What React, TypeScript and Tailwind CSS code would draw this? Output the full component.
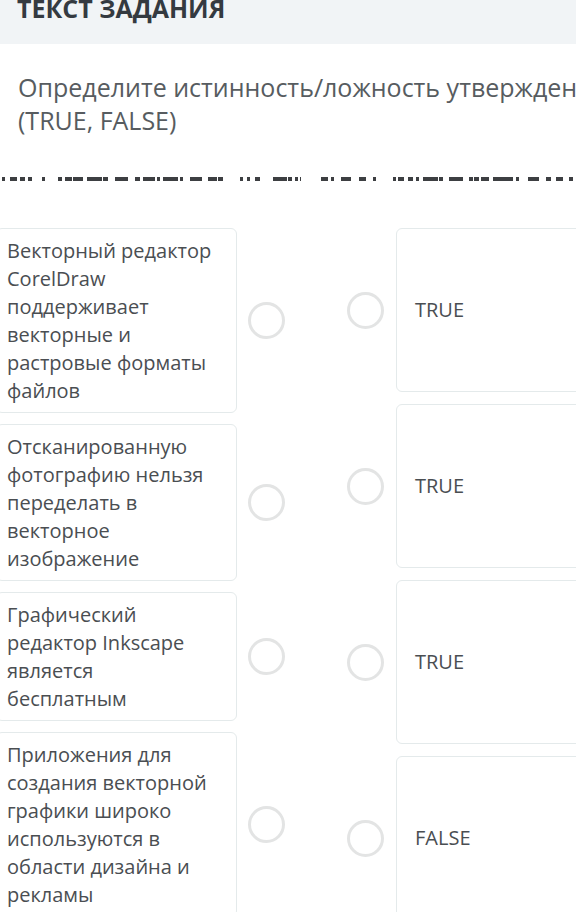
const font = { fontFamily: '"Open Sans", "Noto Sans", sans-serif' };

const statements = [
  ['Векторный редактор', 'CorelDraw', 'поддерживает', 'векторные и', 'растровые форматы', 'файлов'],
  ['Отсканированную', 'фотографию нельзя', 'переделать в', 'векторное', 'изображение'],
  ['Графический', 'редактор Inkscape', 'является', 'бесплатным'],
  ['Приложения для', 'создания векторной', 'графики широко', 'используются в', 'области дизайна и', 'рекламы'],
];

const answers = ['TRUE', 'TRUE', 'TRUE', 'FALSE'];

// dashes of the separator line, [from, to] in px
const dashes: [number, number][] = [
  [2, 5], [10, 17], [20, 25], [28, 32], [42, 45], [58, 62], [65, 72], [73, 83], [87, 102], [103, 108],
  [115, 128], [135, 140], [143, 155], [157, 160], [163, 178], [180, 183], [190, 202], [208, 217],
  [218, 223], [240, 243], [247, 250], [255, 260], [273, 287], [288, 292], [295, 298], [300, 301],
  [321, 328], [331, 334], [341, 351], [359, 366], [373, 376], [393, 396], [398, 404], [408, 413],
  [416, 419], [423, 438], [439, 443], [449, 463], [469, 473], [474, 479], [481, 489], [493, 513],
  [516, 519], [528, 539], [546, 551], [556, 563], [569, 573],
];

const Radio = () => (
  <div className="w-[37px] h-[37px] shrink-0 rounded-full border-[3px] border-[#e3e4e4] bg-white" />
);

const App = () => {
  return (
    <div className="w-[576px] h-[912px] overflow-hidden bg-white" style={font}>
      {/* Шапка */}
      <div className="h-[44px] flex flex-col bg-[#f1f4f6] px-[17px]">
        <h1 className="-mt-[3px] text-[25px] leading-[22px] font-bold text-[#343a40] whitespace-nowrap">
          ТЕКСТ ЗАДАНИЯ
        </h1>
      </div>

      {/* Вопрос */}
      <div className="mt-[27px] px-[18px] text-[25px] leading-[33px] text-[#575c60] whitespace-nowrap">
        <p>Определите истинность/ложность утверждений</p>
        <p>(TRUE, FALSE)</p>
      </div>

      <svg className="block mt-[40px]" width="576" height="4" viewBox="0 0 576 4">
        {dashes.map(([a, b]) => (
          <rect key={a} x={a} y={0} width={b - a} height={4} fill="#3d3f42" />
        ))}
      </svg>

      {/* Сопоставление */}
      <div className="mt-[47px] flex items-start">
        <div className="flex flex-col gap-[11px]">
          {statements.map((lines, i) => (
            <div key={i} className="flex items-center gap-[11px]">
              <div className="-ml-[4px] w-[241px] rounded-md border border-[#e4eaeb] bg-white pl-[10px] pt-[8px] pb-[7px] text-[20px] leading-[28px] text-[#4a4e52]">
                {lines.map((l) => (
                  <div key={l} className="whitespace-nowrap">{l}</div>
                ))}
              </div>
              <Radio />
            </div>
          ))}
        </div>

        <div className="ml-[62px] flex flex-col gap-3">
          {answers.map((a, i) => (
            <div key={i} className="flex items-center gap-3">
              <Radio />
              <div className="h-[164px] w-[240px] rounded-md border border-[#e4eaeb] bg-white pl-[18px] flex items-center text-[20px] text-[#4a4e52]">
                {a}
              </div>
            </div>
          ))}
        </div>
      </div>
    </div>
  );
};

export default App;
